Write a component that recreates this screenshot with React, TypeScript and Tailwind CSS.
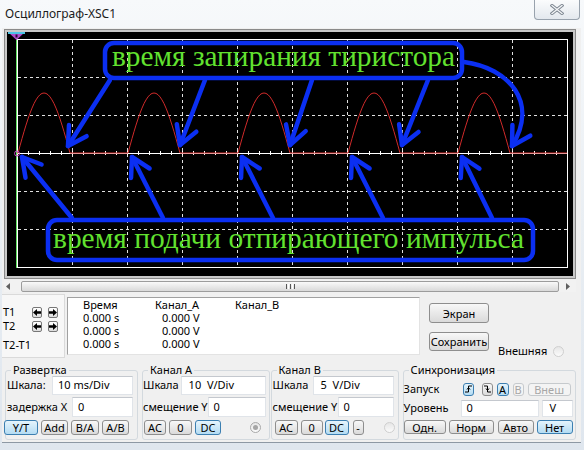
import React from "react";
import clsx from "clsx";

type P = [number, number];

const BLUE = "#0b2ff2";
const GREEN = "#62e22f";

// V-shaped arrow head at t, opening back towards `from`
function head(t: P, from: P, L = 21, a = 0.52) {
  const dx = from[0] - t[0];
  const dy = from[1] - t[1];
  const n = Math.hypot(dx, dy);
  const ux = dx / n;
  const uy = dy / n;
  const rot = (ang: number): P => [
    t[0] + L * (ux * Math.cos(ang) - uy * Math.sin(ang)),
    t[1] + L * (ux * Math.sin(ang) + uy * Math.cos(ang)),
  ];
  const p1 = rot(a);
  const p2 = rot(-a);
  return `M${p1[0].toFixed(1)} ${p1[1].toFixed(1)} L${t[0]} ${t[1]} L${p2[0].toFixed(1)} ${p2[1].toFixed(1)}`;
}

const topArrows: [P, P][] = [
  [[103, 48], [61, 114]],
  [[198, 48], [173, 113]],
  [[305, 48], [283, 113]],
  [[421, 48], [395, 113]],
];

const bottomArrows: [P, P][] = [
  [[65, 186], [15, 125]],
  [[156, 186], [125, 125]],
  [[266, 186], [235, 125]],
  [[376, 186], [345, 125]],
  [[485, 186], [455, 125]],
];

function Scope() {
  const vx = [65, 120, 175, 230, 285, 340, 395, 450, 505];
  const hy = [45, 83, 159, 197];

  // rectified half waves, 10 ms/div -> period of two divisions
  let trace = "M10 121";
  for (let k = 0; k < 5; k++) {
    const x0 = 11 + 110 * k;
    trace += ` L${x0} 121`;
    for (let i = 1; i <= 26; i++) {
      const t = i / 26;
      trace += ` L${(x0 + 52 * t).toFixed(1)} ${(121 - 60 * Math.sin(Math.PI * t)).toFixed(1)}`;
    }
  }
  trace += " L560 121";

  let ticks = "";
  for (let x = 10; x <= 560; x += 11) ticks += `M${x + 0.5} 119 V123 `;

  return (
    <svg width="566" height="244" viewBox="0 0 566 244" className="block">
      {/* grid */}
      <rect x="10.5" y="7.5" width="550" height="228" fill="none" stroke="#fff" strokeWidth="1" />
      {vx.map((x) => (
        <line key={x} x1={x + 0.5} y1="8" x2={x + 0.5} y2="235" stroke="#e0e0e0" strokeDasharray="3 3" />
      ))}
      {hy.map((y) => (
        <line key={y} x1="11" y1={y + 0.5} x2="560" y2={y + 0.5} stroke="#e0e0e0" strokeDasharray="3 3" />
      ))}
      <line x1="11" y1="121.5" x2="560" y2="121.5" stroke="#fff" />
      <path d={ticks} stroke="#fff" strokeWidth="1" />

      {/* cursor T1 + marker */}
      <line x1="9.5" y1="7" x2="9.5" y2="236" stroke="#5fe05f" />
      <polygon points="1,0 18,0 9.5,8" fill="#b04ccc" />
      <rect x="1" y="0" width="17" height="2" fill="#4cc3e6" />
      <rect x="8.5" y="2.5" width="2" height="3" fill="#2a0a3a" />

      {/* signal */}
      <path d={trace} fill="none" stroke="#d02a2a" strokeWidth="1" />
      <circle cx="10" cy="121.5" r="2.5" fill="none" stroke="#c040c0" />

      {/* annotations */}
      <g stroke={BLUE} strokeWidth="4.5" fill="none" strokeLinecap="round" strokeLinejoin="round">
        {topArrows.map(([s, t], i) => (
          <g key={i}>
            <path d={`M${s[0]} ${s[1]} L${t[0]} ${t[1]}`} />
            <path d={head(t, s)} />
          </g>
        ))}
        <path d="M457 30 C502 36 532 70 505 114" />
        <path d={head([505, 114], [530, 72])} />
        {bottomArrows.map(([s, t], i) => (
          <g key={`b${i}`}>
            <path d={`M${s[0]} ${s[1]} L${t[0]} ${t[1]}`} />
            <path d={head(t, s)} />
          </g>
        ))}
        <rect x="98" y="11" width="357" height="35" rx="9" />
        <rect x="41" y="188" width="485" height="40" rx="9" />
      </g>
      <text
        x="105"
        y="34"
        fontSize="29"
        className="font-['Liberation_Serif',serif]"
        style={{ fontFamily: "'Liberation Serif', serif" }}
        fill={GREEN}
        textLength="343"
        lengthAdjust="spacingAndGlyphs"
      >
        время запирания тиристора
      </text>
      <text
        x="46"
        y="216"
        fontSize="30"
        className="font-['Liberation_Serif',serif]"
        style={{ fontFamily: "'Liberation Serif', serif" }}
        fill={GREEN}
        textLength="471"
        lengthAdjust="spacingAndGlyphs"
      >
        время подачи отпирающего импульса
      </text>
    </svg>
  );
}

function WinBtn({
  children,
  on,
  off,
  className,
}: {
  children?: React.ReactNode;
  on?: boolean;
  off?: boolean;
  className?: string;
}) {
  return (
    <div
      className={clsx(
        "flex shrink-0 items-center justify-center whitespace-nowrap rounded-[3px] border leading-none",
        on
          ? "border-[#3c7fb1] bg-linear-to-b from-[#e5f4fc] to-[#b4dcf3]"
          : off
          ? "border-[#c6cacd] bg-[#f4f4f4] text-[#a6a6a6]"
          : "border-[#8e8e8e] bg-linear-to-b from-[#f8f8f8] to-[#dadada]",
        className
      )}
    >
      {children}
    </div>
  );
}

function Field({ children, className }: { children?: React.ReactNode; className?: string }) {
  return (
    <div
      className={clsx(
        "flex shrink-0 items-center whitespace-pre border border-[#e0e4e9] border-t-[#c4c8ce] bg-white pl-[5px]",
        className
      )}
    >
      {children}
    </div>
  );
}

function Radio({ dot, className }: { dot?: boolean; className?: string }) {
  return (
    <div
      className={clsx(
        "flex h-[11px] w-[11px] shrink-0 items-center justify-center rounded-full border bg-linear-to-b from-[#e6e6e6] to-[#fbfbfb]",
        dot ? "border-[#a9a9a9]" : "border-[#cfcfcf]",
        className
      )}
    >
      {dot && <div className="h-[5px] w-[5px] rounded-full bg-[#a5a5a5]" />}
    </div>
  );
}

function TArrow({ right, className }: { right?: boolean; className?: string }) {
  return (
    <div
      className={clsx(
        "flex h-[11px] w-[10px] items-center justify-center rounded-[2px] border border-[#777] bg-linear-to-b from-white to-[#dcdcdc]",
        className
      )}
    >
      <svg width="8" height="7" viewBox="0 0 8 7">
        <path d={right ? "M0 2.3H4V0L8 3.5 4 7V4.7H0Z" : "M8 2.3H4V0L0 3.5 4 7V4.7H8Z"} fill="#000" />
      </svg>
    </div>
  );
}

function Edge({ fall }: { fall?: boolean }) {
  return (
    <svg width="9" height="10" viewBox="0 0 9 10">
      <path d={fall ? "M1 2H4.5V8H8" : "M1 8H4.5V2H8"} fill="none" stroke="#000" strokeWidth="1" />
      <path d={fall ? "M3 4.5L4.5 6.5L6 4.5" : "M3 5.5L4.5 3.5L6 5.5"} fill="none" stroke="#000" strokeWidth="1" />
    </svg>
  );
}

function Group({ title, className, children }: { title: string; className?: string; children: React.ReactNode }) {
  return (
    <fieldset className={clsx("h-[77px] shrink-0 rounded-[3px] border border-[#d3d9de]", className)}>
      <legend className="ml-[5px] px-[2px] leading-[14px]">{title}</legend>
      {children}
    </fieldset>
  );
}

export default function App() {
  return (
    <div className="h-[450px] w-[584px] overflow-hidden bg-linear-to-b from-[#f7f9fb] via-[#e9eef3] to-[#dfe6ee] font-['Noto_Sans',sans-serif] text-[11px] text-black">
      {/* Title bar */}
      <div className="flex h-[28px] items-start justify-between">
        <span className="pl-[5px] pt-[6px] text-[12px] leading-[16px] text-[#1b1b1b]">Осциллограф-XSC1</span>
        <div className="mr-[4px] flex h-[20px] w-[46px] items-center justify-center rounded-b-[4px] border border-t-0 border-[#98a2ad] bg-linear-to-b from-[#fbfcfd] to-[#e3e8ee]">
          <svg width="14" height="11" viewBox="0 0 14 11">
            <path d="M2 1.5L12 9.5M12 1.5L2 9.5" stroke="#7c8590" strokeWidth="3.2" strokeLinecap="square" />
            <path d="M2 1.5L12 9.5M12 1.5L2 9.5" stroke="#f4f6f8" strokeWidth="1.3" strokeLinecap="square" />
          </svg>
        </div>
      </div>

      {/* Client area */}
      <div className="ml-[2px] flex h-[415px] w-[579px] flex-col border-b border-[#8d98a4] bg-[#f0f0f0]">
        {/* Scope screen */}
        <div className="ml-[2px] mt-[1px] w-[572px] border border-[#8a8a8a] bg-[#c9c9c9] p-[2px]">
          <div className="h-[244px] bg-black">
            <Scope />
          </div>
        </div>

        {/* Horizontal scrollbar */}
        <div className="ml-[2px] mt-[1px] flex h-[12px] w-[572px] items-center bg-[#f2f2f2]">
          <div className="flex w-[17px] pl-[2px]">
            <svg width="4" height="7" viewBox="0 0 4 7">
              <path d="M4 0V7L0 3.5Z" fill="#606060" />
            </svg>
          </div>
          <div className="flex h-[11px] flex-1 items-center justify-center gap-[1px] rounded-[2px] border border-[#9c9c9c] bg-linear-to-b from-[#f9f9f9] to-[#d9d9d9]">
            <div className="h-[5px] w-[1px] bg-[#555]" />
            <div className="h-[5px] w-[1px] bg-[#fff]" />
            <div className="h-[5px] w-[1px] bg-[#555]" />
            <div className="h-[5px] w-[1px] bg-[#fff]" />
            <div className="h-[5px] w-[1px] bg-[#555]" />
          </div>
          <div className="flex w-[17px] justify-center">
            <svg width="4" height="7" viewBox="0 0 4 7">
              <path d="M0 0V7L4 3.5Z" fill="#606060" />
            </svg>
          </div>
        </div>

        {/* Cursors / readout row */}
        <div className="mt-[2px] flex h-[64px] items-start whitespace-nowrap">
          <div className="h-[64px] w-[63px] shrink-0 border border-l-0 border-[#dadada] bg-[#f7f7f7] pl-[1px] pt-[11px]">
            <div className="flex h-[12px] items-center">
              <span className="w-[29px] leading-[12px]">T1</span>
              <TArrow />
              <TArrow right className="ml-[6px]" />
            </div>
            <div className="mt-[2px] flex h-[12px] items-center">
              <span className="w-[29px] leading-[12px]">T2</span>
              <TArrow />
              <TArrow right className="ml-[6px]" />
            </div>
            <div className="mt-[6px] leading-[14px]">T2-T1</div>
          </div>

          <div className="ml-[2px] mt-[3px] h-[58px] w-[353px] shrink-0 border border-[#e3e3e3] border-l-[#a0a0a0] border-t-[#a0a0a0] bg-white">
            <div className="grid grid-cols-[72px_80px_1fr] pl-[15px] leading-[13px]">
              <span>Время</span>
              <span>Канал_A</span>
              <span>Канал_B</span>
              <span>0.000 s</span>
              <span className="pl-[7px]">0.000 V</span>
              <span />
              <span>0.000 s</span>
              <span className="pl-[7px]">0.000 V</span>
              <span />
              <span>0.000 s</span>
              <span className="pl-[7px]">0.000 V</span>
              <span />
            </div>
          </div>

          <div className="ml-[9px] mt-[9px] flex flex-col gap-[9px]">
            <WinBtn className="h-[20px] w-[60px]">Экран</WinBtn>
            <WinBtn className="h-[19px] w-[60px]">Сохранить</WinBtn>
          </div>

          <div className="ml-[9px] mt-[50px] flex h-[14px] items-center">
            <span>Внешняя</span>
            <Radio className="ml-[6px]" />
          </div>
        </div>

        {/* Settings groups */}
        <div className="mt-[5px] flex items-start whitespace-nowrap">
          <Group title="Развертка" className="ml-[3px] w-[133px]">
            <div className="-mt-[1px] flex h-[19px] items-center pl-[1px] pr-[4px]">
              <span>Шкала:</span>
              <Field className="ml-auto h-[19px] w-[81px]">10 ms/Div</Field>
            </div>
            <div className="mt-[2px] flex h-[20px] items-center pl-[1px] pr-[4px]">
              <span>задержка X</span>
              <Field className="ml-auto h-[20px] w-[61px]">0</Field>
            </div>
            <div className="-ml-[2px] mt-[3px] flex h-[15px]">
              <WinBtn on className="w-[34px]">Y/T</WinBtn>
              <WinBtn className="ml-[3px] w-[27px]">Add</WinBtn>
              <WinBtn className="ml-[3px] w-[28px]">B/A</WinBtn>
              <WinBtn className="ml-[3px] w-[27px]">A/B</WinBtn>
            </div>
          </Group>

          <Group title="Канал A" className="ml-[4px] w-[127px]">
            <div className="-mt-[1px] flex h-[19px] items-center pr-[3px]">
              <span>Шкала</span>
              <Field className="ml-auto h-[19px] w-[85px] pl-[7px]">10  V/Div</Field>
            </div>
            <div className="mt-[2px] flex h-[20px] items-center pr-[3px]">
              <span>смещение Y</span>
              <Field className="ml-auto h-[20px] w-[58px]">0</Field>
            </div>
            <div className="ml-[1px] mt-[3px] flex h-[15px] items-center">
              <WinBtn className="h-[15px] w-[22px]">AC</WinBtn>
              <WinBtn className="ml-[3px] h-[15px] w-[23px]">0</WinBtn>
              <WinBtn on className="ml-[3px] h-[15px] w-[26px]">DC</WinBtn>
              <Radio dot className="ml-auto mr-[8px]" />
            </div>
          </Group>

          <Group title="Канал B" className="ml-[1px] w-[128px]">
            <div className="-mt-[1px] flex h-[19px] items-center pl-[1px] pr-[4px]">
              <span>Шкала</span>
              <Field className="ml-auto h-[19px] w-[81px] pl-[7px]">5  V/Div</Field>
            </div>
            <div className="mt-[2px] flex h-[20px] items-center pl-[1px] pr-[4px]">
              <span>смещение Y</span>
              <Field className="ml-auto h-[20px] w-[56px]">0</Field>
            </div>
            <div className="mt-[3px] flex h-[15px] items-center pl-[3px]">
              <WinBtn className="h-[15px] w-[23px]">AC</WinBtn>
              <WinBtn className="ml-[3px] h-[15px] w-[22px]">0</WinBtn>
              <WinBtn on className="ml-[2px] h-[15px] w-[24px]">DC</WinBtn>
              <WinBtn className="ml-[4px] h-[15px] w-[11px]">-</WinBtn>
              <Radio className="ml-auto mr-[3px]" />
            </div>
          </Group>

          <Group title="Синхронизация" className="ml-[4px] w-[173px]">
            <div className="mt-[5px] flex h-[14px] items-center">
              <span className="w-[59px]">Запуск</span>
              <WinBtn on className="h-[13px] w-[11px]">
                <Edge />
              </WinBtn>
              <WinBtn className="ml-[8px] h-[13px] w-[11px]">
                <Edge fall />
              </WinBtn>
              <WinBtn on className="ml-[4px] h-[13px] w-[12px]">A</WinBtn>
              <WinBtn off className="ml-[4px] h-[13px] w-[11px]">B</WinBtn>
              <WinBtn off className="ml-[4px] h-[13px] w-[43px]">Внеш</WinBtn>
            </div>
            <div className="mt-[4px] flex h-[17px] items-center">
              <span className="w-[57px]">Уровень</span>
              <Field className="h-[17px] w-[78px]">0</Field>
              <Field className="ml-[3px] h-[17px] w-[31px] pl-[7px]">V</Field>
            </div>
            <div className="mt-[3px] flex h-[14px]">
              <WinBtn className="w-[42px]">Одн.</WinBtn>
              <WinBtn className="ml-[3px] w-[45px]">Норм</WinBtn>
              <WinBtn className="ml-[4px] w-[36px]">Авто</WinBtn>
              <WinBtn on className="ml-[3px] w-[36px]">Нет</WinBtn>
            </div>
          </Group>
        </div>
      </div>
    </div>
  );
}
